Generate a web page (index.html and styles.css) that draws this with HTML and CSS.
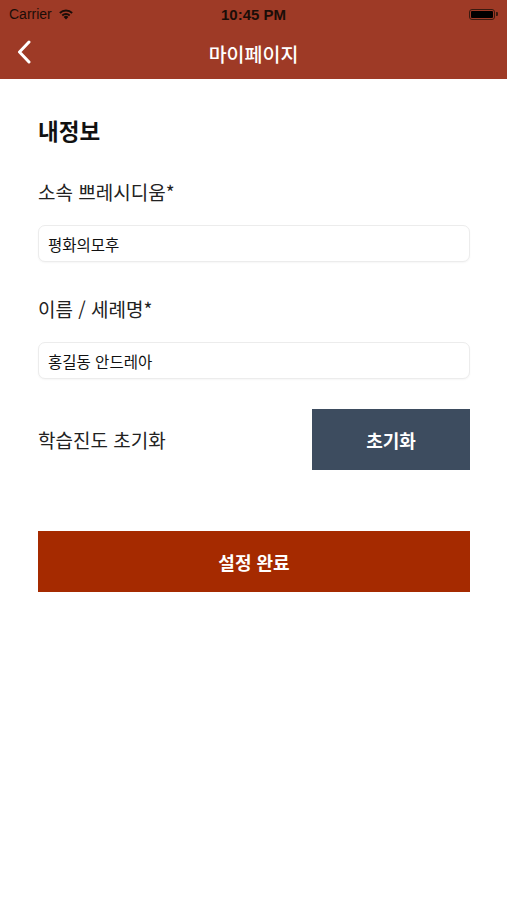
FILE: index.html
```html
<!DOCTYPE html>
<html lang="ko">

<head>
    <meta charset="UTF-8">
    <meta name="viewport" content="width=device-width, initial-scale=1.0">
    <title>마이페이지</title>
    <link rel="stylesheet" href="styles.css">
</head>

<body>
    <div class="top">
        <div class="status-bar">
            <div class="carrier">
                Carrier
                <svg class="wifi" width="16" height="12" viewBox="0 0 16 12">
                    <path d="M8 11.5 L5.6 8.9 A3.4 3.4 0 0 1 10.4 8.9 Z" fill="#1a0d08" />
                    <path d="M3.6 6.8 A6.3 6.3 0 0 1 12.4 6.8 L11.1 8.2 A4.4 4.4 0 0 0 4.9 8.2 Z" fill="#1a0d08" />
                    <path d="M1.2 4.3 A9.6 9.6 0 0 1 14.8 4.3 L13.5 5.7 A7.7 7.7 0 0 0 2.5 5.7 Z" fill="#1a0d08" />
                </svg>
            </div>
            <div class="time">10:45 PM</div>
            <div class="battery">
                <span class="battery-body"><span class="battery-level"></span></span>
                <span class="battery-tip"></span>
            </div>
        </div>
        <div class="nav-bar">
            <button class="back-btn" aria-label="back">
                <svg width="14" height="24" viewBox="0 0 14 24">
                    <path d="M12 2 L2.5 12 L12 22" fill="none" stroke="#fff" stroke-width="3" stroke-linecap="round" stroke-linejoin="round" />
                </svg>
            </button>
            <h1 class="nav-title">마이페이지</h1>
        </div>
    </div>

    <main class="content">
        <h2 class="section-title">내정보</h2>

        <div class="field">
            <label for="presidium">소속 쁘레시디움*</label>
            <input type="text" id="presidium" value="평화의모후">
        </div>

        <div class="field">
            <label for="name">이름 / 세례명*</label>
            <input type="text" id="name" value="홍길동 안드레아">
        </div>

        <div class="reset-row">
            <span class="reset-label">학습진도 초기화</span>
            <button class="reset-btn">초기화</button>
        </div>

        <button class="submit-btn">설정 완료</button>
    </main>
</body>

</html>
```

FILE: styles.css
```css
body {
    margin: 0;
    font-family: "Noto Sans CJK KR", "Noto Sans", sans-serif;
    background-color: #fff;
    color: #111;
    width: 507px;
}

.top {
    background-color: #9e3a26;
}

.status-bar {
    height: 28px;
    display: flex;
    align-items: center;
    justify-content: space-between;
    padding: 0 9px;
    font-family: "Liberation Sans", Arial, sans-serif;
    color: #1a0d08;
    font-size: 14px;
}

.carrier {
    display: flex;
    align-items: center;
    gap: 6px;
    flex: 1;
}

.time {
    font-weight: bold;
    font-size: 15px;
}

.battery {
    flex: 1;
    display: flex;
    justify-content: flex-end;
    align-items: center;
}

.battery-body {
    width: 26px;
    height: 11px;
    border: 1px solid #3a1a10;
    border-radius: 3px;
    padding: 1px;
    box-sizing: border-box;
    display: flex;
}

.battery-level {
    flex: 1;
    background-color: #000;
    border-radius: 1px;
}

.battery-tip {
    width: 2px;
    height: 4px;
    background-color: #3a1a10;
    border-radius: 0 1px 1px 0;
    margin-left: 1px;
}

.nav-bar {
    height: 51px;
    display: flex;
    align-items: center;
    justify-content: center;
    position: relative;
}

.back-btn {
    position: absolute;
    left: 14px;
    top: 12px;
    background: none;
    border: none;
    padding: 0;
    width: 20px;
    height: 26px;
}

.nav-title {
    margin: 0;
    color: #fff;
    font-size: 19.5px;
    font-weight: 500;
}

.content {
    padding: 35px 37px 0 38px;
}

.section-title {
    margin: 0 0 33px;
    font-size: 22.5px;
    font-weight: bold;
    line-height: 32px;
}

.field {
    display: flex;
    flex-direction: column;
    margin-bottom: 34px;
}

.field label {
    font-size: 19px;
    line-height: 26px;
    margin-bottom: 20px;
    color: #222;
}

.field input {
    height: 37px;
    border: 1px solid #ececec;
    border-radius: 7px;
    padding: 0 9px;
    font-family: inherit;
    font-size: 15.5px;
    color: #111;
    box-sizing: border-box;
    box-shadow: 0 1px 2px rgba(0, 0, 0, 0.04);
}

.reset-row {
    display: flex;
    align-items: center;
    justify-content: space-between;
    margin-top: -4px;
}

.reset-label {
    font-size: 19px;
    color: #222;
}

.reset-btn {
    width: 158px;
    height: 61px;
    background-color: #3d4c5f;
    color: #fff;
    border: none;
    font-family: inherit;
    font-size: 18px;
    font-weight: bold;
}

.submit-btn {
    display: block;
    width: 100%;
    height: 61px;
    margin-top: 61px;
    background-color: #a52a00;
    color: #fff;
    border: none;
    font-family: inherit;
    font-size: 18px;
    font-weight: bold;
}
```
